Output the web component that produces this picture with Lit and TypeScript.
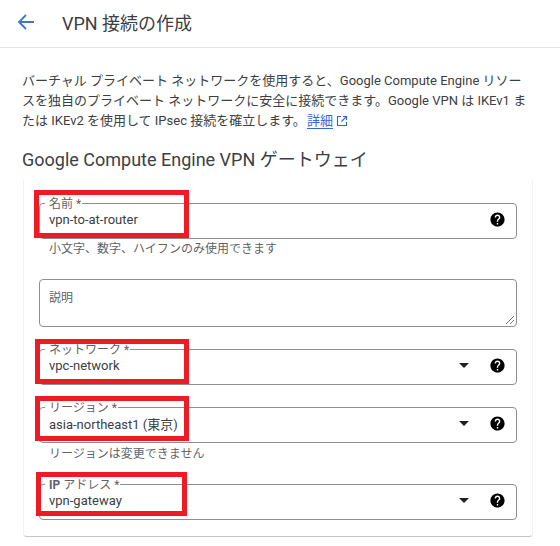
import { LitElement, html, css, svg } from "lit";
import { customElement } from "lit/decorators.js";

const help = html`<svg class="help" viewBox="0 0 24 24" width="17" height="17"><path d="M12 2C6.48 2 2 6.48 2 12s4.48 10 10 10 10-4.48 10-10S17.52 2 12 2zm1 17h-2v-2h2v2zm2.07-7.75l-.9.92C13.45 12.9 13 13.5 13 15h-2v-.5c0-1.1.45-2.1 1.17-2.83l1.24-1.26c.37-.36.59-.86.59-1.41 0-1.1-.9-2-2-2s-2 .9-2 2H8c0-2.21 1.79-4 4-4s4 1.79 4 4c0 .88-.36 1.68-.93 2.25z" fill="#000"/></svg>`;
const caret = html`<span class="caret"></span>`;

@customElement("app-root")
export class AppRoot extends LitElement {
  static styles = css`
    :host { display: block; width: 560px; height: 546px; overflow: hidden; background: #fff; color: #3c4043;
      font-family: Roboto, "Noto Sans CJK JP", sans-serif; font-size: 13px; }
    .header { height: 48px; box-sizing: border-box; display: flex; align-items: center; border-bottom: 1px solid #e5e5e5; padding: 0 0 4px 16px; }
    .back { display: block; width: 20px; height: 20px; }
    .title { margin-left: 26px; font-size: 18px; color: #3c4043; }
    .intro { margin: 23px 0 0 22px; width: 510px; line-height: 20px; color: #3c4043; }
    .link { color: #3367d6; border-bottom: 1px solid #3367d6; margin-left: 1px; }
    .ext { display: inline-block; vertical-align: -2px; margin-left: 3px; }
    h2 { margin: 17px 0 0 22px; font-size: 18px; line-height: 24px; font-weight: 400; color: #3c4043; }
    .card { margin: 7px 0 0 23px; width: 510px; height: 358px; box-sizing: border-box; position: relative;
      border: 1px solid #f6f0f1; border-top-color: transparent; border-bottom: 1px solid #c4c4c4; border-radius: 0 0 4px 4px; padding: 23px 16px 0 15px; }
    .stack { display: flex; flex-direction: column; }
    .field { position: relative; box-sizing: border-box; width: 478px; border: 1px solid #8f8f8f; border-radius: 4px;
      display: flex; align-items: center; padding: 0 10px 4px 9px; height: 36px; flex: none; color: #3c4043; }
    .value { flex: 1; font-size: 13px; color: #3c4043; }
    .label { position: absolute; left: 5px; top: -7px; background: #fff; padding: 0 1px 0 4px; font-size: 12px; line-height: 14px; color: #5f6368; }
    .help { display: block; margin-left: 20px; flex: none; }
    .caret { width: 0; height: 0; border-left: 5px solid transparent; border-right: 5px solid transparent; border-top: 5px solid #202124; }
    .hint { font-size: 12px; line-height: 16px; color: #5f6368; margin: 2px 0 0 10px; }
    .hint3 { margin-top: 3px; }
    .desc { height: 48px; align-items: flex-start; padding-top: 8px; font-size: 12px; color: #5f6368; }
    .grip { position: absolute; right: 1px; bottom: 1px; }
    .mark { position: absolute; box-sizing: border-box; border: 5px solid #ed1c24; pointer-events: none; background: transparent; }
    .gap22 { margin-top: 22px; }
    .m1 { left: 34px; top: 190px; width: 155px; height: 48px; }
    .m2 { left: 35px; top: 339px; width: 154px; height: 45px; }
    .m3 { left: 35px; top: 396px; width: 154px; height: 45px; }
    .m4 { left: 36px; top: 472px; width: 151px; height: 44px; }
  `;

  render() {
    return html`
      <div class="header">
        <svg class="back" viewBox="0 0 20 20"><path d="M18 10H3M10 3 3 10l7 7" fill="none" stroke="#4272d7" stroke-width="1.800"/></svg>
        <div class="title">VPN 接続の作成</div>
      </div>
      <div class="intro">バーチャル プライベート ネットワークを使用すると、Google Compute Engine リソースを独自のプライベート ネットワークに安全に接続できます。Google VPN は IKEv1 または IKEv2 を使用して IPsec 接続を確立します。<span class="link">詳細</span><svg class="ext" viewBox="0 0 12 12" width="12" height="12"><path d="M5 1.5H1.5v9h9V7M7 1.5h3.500V5M10.500 1.500 5.500 6.500" fill="none" stroke="#3367d6" stroke-width="1.100"/></svg></div>
      <h2>Google Compute Engine VPN ゲートウェイ</h2>
      <div class="card">
        <div class="stack">
          <div class="field"><span class="label">名前 *</span><span class="value">vpn-to-at-router</span>${help}</div>
          <div class="hint">小文字、数字、ハイフンのみ使用できます</div>
          <div class="field desc gap22"><span>説明</span>
            <svg class="grip" viewBox="0 0 10 10" width="10" height="10">${svg`<path d="M9 1 1 9M9 5 5 9" stroke="#777" stroke-width="1" fill="none"/>`}</svg></div>
          <div class="field gap22"><span class="label">ネットワーク *</span><span class="value">vpc-network</span>${caret}${help}</div>
          <div class="field gap22"><span class="label">リージョン *</span><span class="value">asia-northeast1 (東京)</span>${caret}${help}</div>
          <div class="hint hint3">リージョンは変更できません</div>
          <div class="field gap22"><span class="label"><b>IP</b> アドレス *</span><span class="value">vpn-gateway</span>${caret}${help}</div>
        </div>
      </div>
      <div class="mark m1"></div>
      <div class="mark m2"></div>
      <div class="mark m3"></div>
      <div class="mark m4"></div>
    `;
  }
}
